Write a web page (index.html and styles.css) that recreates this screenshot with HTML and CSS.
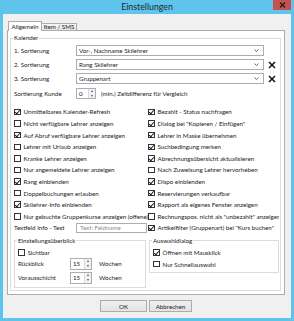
FILE: index.html
```html
<!DOCTYPE html>
<html lang="de">
<head>
    <meta charset="UTF-8">
    <meta name="viewport" content="width=device-width, initial-scale=1.0">
    <title>Einstellungen</title>
    <link rel="stylesheet" href="styles.css">
</head>
<body>
    <div id="window">
        <div id="titlebar">
            <span id="title">Einstellungen</span>
            <div id="close-button">
                <svg width="7" height="6" viewBox="0 0 7 6"><path d="M1 0.5 L6 5.5 M6 0.5 L1 5.5" stroke="#222" stroke-width="1.4"/></svg>
            </div>
        </div>

        <div id="client">
            <div id="tabs">
                <div class="tab active">Allgemein</div>
                <div class="tab">Item / SMS</div>
            </div>

            <div id="panel">
                <fieldset class="group" id="kalender">
                    <legend>Kalender</legend>

                    <div class="sort-row">
                        <span class="label">1. Sortierung</span>
                        <div class="combo">Vor-, Nachname Skilehrer<svg class="arrow" width="5" height="3" viewBox="0 0 5 3"><path d="M0.5 0.5 L2.5 2.5 L4.5 0.5" fill="none" stroke="#555" stroke-width="0.9"/></svg></div>
                    </div>
                    <div class="sort-row">
                        <span class="label">2. Sortierung</span>
                        <div class="combo">Rang Skilehrer<svg class="arrow" width="5" height="3" viewBox="0 0 5 3"><path d="M0.5 0.5 L2.5 2.5 L4.5 0.5" fill="none" stroke="#555" stroke-width="0.9"/></svg></div>
                        <svg class="remove" width="8" height="8" viewBox="0 0 8 8"><path d="M1 1 L7 7 M7 1 L1 7" stroke="#111" stroke-width="1.5"/></svg>
                    </div>
                    <div class="sort-row">
                        <span class="label">3. Sortierung</span>
                        <div class="combo">Gruppenart<svg class="arrow" width="5" height="3" viewBox="0 0 5 3"><path d="M0.5 0.5 L2.5 2.5 L4.5 0.5" fill="none" stroke="#555" stroke-width="0.9"/></svg></div>
                        <svg class="remove" width="8" height="8" viewBox="0 0 8 8"><path d="M1 1 L7 7 M7 1 L1 7" stroke="#111" stroke-width="1.5"/></svg>
                    </div>
                    <div class="sort-row kunde">
                        <span class="label">Sortierung Kunde</span>
                        <div class="spin"><span>0</span><span class="spin-buttons"><i class="up"></i><i class="down"></i></span></div>
                        <span class="spin-note">(min.) Zeitdifferenz für Vergleich</span>
                    </div>

                    <div class="options">
                        <label class="check"><span class="cb on"></span>Unmittelbares Kalender-Refresh</label>
                        <label class="check"><span class="cb on"></span>Bezahlt - Status nachfragen</label>
                        <label class="check"><span class="cb"></span>Nicht verfügbare Lehrer anzeigen</label>
                        <label class="check"><span class="cb on"></span>Dialog bei "Kopieren / Einfügen"</label>
                        <label class="check"><span class="cb on"></span>Auf Abruf verfügbare Lehrer anzeigen</label>
                        <label class="check"><span class="cb on"></span>Lehrer in Maske übernehmen</label>
                        <label class="check"><span class="cb"></span>Lehrer mit Urlaub anzeigen</label>
                        <label class="check"><span class="cb on"></span>Suchbedingung merken</label>
                        <label class="check"><span class="cb"></span>Kranke Lehrer anzeigen</label>
                        <label class="check"><span class="cb on"></span>Abrechnungsübersicht aktualisieren</label>
                        <label class="check"><span class="cb"></span>Nur angemeldete Lehrer anzeigen</label>
                        <label class="check"><span class="cb"></span>Nach Zuweisung Lehrer hervorheben</label>
                        <label class="check"><span class="cb on"></span>Rang einblenden</label>
                        <label class="check"><span class="cb on"></span>Dispo einblenden</label>
                        <label class="check"><span class="cb"></span>Doppelbuchungen erlauben</label>
                        <label class="check"><span class="cb on"></span>Reservierungen verkaufbar</label>
                        <label class="check"><span class="cb on"></span>Skilehrer-Info einblenden</label>
                        <label class="check"><span class="cb on"></span>Rapport als eigenes Fenster anzeigen</label>
                        <label class="check"><span class="cb"></span>Nur gebuchte Gruppenkurse anzeigen (offene)</label>
                        <label class="check"><span class="cb"></span>Rechnungspos. nicht als "unbezahlt" anzeigen</label>
                        <div class="field-row">
                            <span class="label">Textfeld Info - Text</span>
                            <input type="text" placeholder="Text: Feldname">
                        </div>
                        <label class="check"><span class="cb on"></span>Artikelfilter (Gruppenart) bei "Kurs buchen"</label>
                    </div>

                    <div class="sub-groups">
                        <fieldset class="group" id="ueberblick">
                            <legend>Einstellungsüberblick</legend>
                            <label class="check"><span class="cb"></span>Sichtbar</label>
                            <div class="spin-row">
                                <span class="spin-label">Rückblick</span>
                                <div class="spin wide"><span>15</span><span class="spin-buttons"><i class="up"></i><i class="down"></i></span></div>
                                <span class="unit">Wochen</span>
                            </div>
                            <div class="spin-row">
                                <span class="spin-label">Vorausschicht</span>
                                <div class="spin wide"><span>15</span><span class="spin-buttons"><i class="up"></i><i class="down"></i></span></div>
                                <span class="unit">Wochen</span>
                            </div>
                        </fieldset>
                        <fieldset class="group" id="auswahl">
                            <legend>Auswahldialog</legend>
                            <label class="check"><span class="cb on"></span>Öffnen mit Mausklick</label>
                            <label class="check"><span class="cb"></span>Nur Schnellauswahl</label>
                        </fieldset>
                    </div>
                </fieldset>
            </div>

            <div id="buttons">
                <button id="ok-button">OK</button>
                <button id="cancel-button">Abbrechen</button>
            </div>
        </div>
    </div>
</body>
</html>
```
FILE: styles.css
```css
* {
    box-sizing: border-box;
}

body {
    margin: 0;
    background-color: #5fc4eb;
    color: #222;
    font-family: Lato, "Noto Sans", sans-serif;
    font-size: 6.2px;
}

#window {
    width: 294px;
    height: 321px;
    background-color: #5fc4eb;
}

#titlebar {
    height: 14px;
    display: grid;
    grid-template-columns: 1fr auto 1fr;
    align-items: start;
}

#title {
    grid-column: 2;
    font-size: 8.8px;
    line-height: 14px;
    color: #1e2a30;
}

#close-button {
    grid-column: 3;
    justify-self: end;
    width: 18px;
    height: 10px;
    margin-right: 3px;
    background-color: #c75050;
    display: flex;
    align-items: center;
    justify-content: center;
}

#client {
    margin: 0 3px;
    height: 304px;
    background-color: #f0f0f0;
    padding: 7px 6px 0 4px;
}

#tabs {
    display: flex;
    align-items: flex-end;
    height: 9px;
    margin-left: 1px;
    position: relative;
    z-index: 1;
}

.tab {
    height: 7px;
    width: 35px;
    line-height: 6px;
    text-align: center;
    border: 1px solid #acacac;
    border-bottom: none;
    border-left: none;
    background: linear-gradient(#f4f4f4, #e6e6e6);
}

.tab.active {
    width: 34px;
    height: 10px;
    line-height: 9px;
    margin-bottom: -1px;
    border-left: 1px solid #acacac;
    background: #fff;
}

#panel {
    height: 265px;
    background-color: #fff;
    border: 1px solid #acacac;
    padding: 3px 3px 0 2px;
}

.group {
    margin: 0;
    border: 1px solid #dcdcdc;
    min-width: 0;
}

.group legend {
    padding: 0 1px;
    margin-left: -1px;
    line-height: 8px;
}

#kalender {
    padding: 3px 1px 2px 3px;
}

.sort-row {
    display: flex;
    align-items: center;
    height: 11px;
    margin-bottom: 3px;
}

.label {
    width: 62px;
    flex: none;
}

.combo {
    width: 188px;
    height: 11px;
    border: 1px solid #abadb3;
    display: flex;
    align-items: center;
    justify-content: space-between;
    padding: 0 4px 0 2px;
}

.remove {
    margin-left: 4px;
}

.sort-row.kunde {
    margin-top: 4px;
    margin-bottom: 0;
}

.spin {
    width: 20px;
    height: 11px;
    border: 1px solid #abadb3;
    display: flex;
    align-items: center;
    justify-content: space-between;
    padding-left: 2px;
}

.spin.wide {
    width: 22px;
    height: 12px;
}

.spin-buttons {
    width: 7px;
    height: 100%;
    display: flex;
    flex-direction: column;
    border-left: 1px solid #dcdcdc;
}

.spin-buttons i {
    flex: 1;
    display: flex;
    align-items: center;
    justify-content: center;
    background-color: #f2f2f2;
}

.spin-buttons i::before {
    content: "";
    border-left: 1.5px solid transparent;
    border-right: 1.5px solid transparent;
}

.spin-buttons .up::before {
    border-bottom: 2px solid #555;
}

.spin-buttons .down::before {
    border-top: 2px solid #555;
}

.spin-note {
    margin-left: 5px;
}

.options {
    display: grid;
    grid-template-columns: 134px 1fr;
    grid-auto-rows: 11.6px;
    margin-top: 7.2px;
}

.check {
    display: flex;
    align-items: center;
    gap: 3px;
    white-space: nowrap;
    overflow: hidden;
}

.cb {
    flex: none;
    width: 6.5px;
    height: 6.5px;
    border: 1px solid #333;
    background-color: #fff;
    position: relative;
}

.cb.on::after {
    content: "";
    position: absolute;
    left: 1.3px;
    top: -0.5px;
    width: 2px;
    height: 3.8px;
    border: solid #111;
    border-width: 0 1.2px 1.2px 0;
    transform: rotate(40deg);
}

.field-row {
    display: flex;
    align-items: center;
}

.field-row input {
    width: 71px;
    height: 10px;
    margin: 0;
    padding: 0 0 0 3px;
    border: 1px solid #abadb3;
    font-family: inherit;
    font-size: 6.2px;
    color: #222;
}

.field-row input::placeholder {
    color: #8c8c8c;
}

.sub-groups {
    display: grid;
    grid-template-columns: 132px 1fr;
    column-gap: 3px;
    align-items: start;
    margin-top: 3.2px;
}

#ueberblick {
    padding: 2px 3px 3px 3px;
}

#ueberblick .check {
    height: 11px;
}

.spin-row {
    display: flex;
    align-items: center;
    height: 12px;
}

.spin-row + .spin-row {
    margin-top: 2px;
}

.spin-label {
    width: 52px;
}

.unit {
    margin-left: 7px;
}

#auswahl {
    padding: 2px 3px 2px 3px;
}

#auswahl .check {
    height: 11.5px;
}

#buttons {
    display: flex;
    justify-content: center;
    gap: 2px;
    margin-top: 5px;
}

#buttons button {
    height: 12px;
    padding: 0;
    border: 1px solid #acacac;
    background: linear-gradient(#f0f0f0, #e3e3e3);
    font-family: inherit;
    font-size: 6.2px;
    color: #222;
}

#ok-button {
    width: 47px;
    border-color: #8f8f8f;
}

#cancel-button {
    width: 43px;
}
```
